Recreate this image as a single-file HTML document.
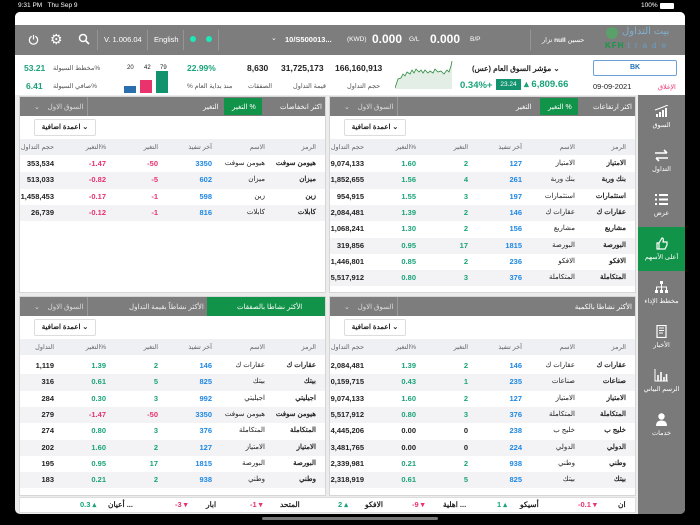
<!DOCTYPE html>
<html><head><meta charset="utf-8"><style>
*{margin:0;padding:0;box-sizing:border-box}
body{width:700px;height:525px;background:#000;position:relative;overflow:hidden;font-family:"Liberation Sans","Noto Sans CJK SC",sans-serif;color:#222}
.a{position:absolute;white-space:nowrap}
#scr{position:absolute;left:15px;top:12px;width:670px;height:502px;background:#ececec;border-radius:5px;overflow:hidden}
.hdr{position:absolute;left:0;top:13px;width:670px;height:30px;background:#7d7d7d;color:#fff}
.sep{position:absolute;top:5px;width:1px;height:20px;background:#959595}
.panel{position:absolute;width:307px;background:#fff;border:1px solid #d6d6d6}
.ph{position:absolute;left:0;top:0;width:100%;height:19px;background:#7d7d7d;color:#fff;font-size:7px}
.dd{position:absolute;top:22px;left:14px;width:62px;height:17px;border:1px solid #ddd;border-radius:2px;font-size:7px;font-weight:bold;line-height:15px;text-align:center;background:#fff}
.ch{position:absolute;top:42px;left:0;width:100%;height:16px;background:#eef0f3;font-size:6.5px;color:#666}
.ch span,.r span{position:absolute;text-align:right}
.r{position:absolute;left:0;width:100%;height:16.3px;font-size:7.5px;font-weight:bold;line-height:16px}
.r:nth-of-type(even){background:#f3f3f5}
.c1{right:9px}.c2{right:60px;font-weight:normal}.c3{right:113px;color:#1e88e5}.c4{right:167px}.c5{right:219px}.c6{right:271px}
.r .c1{font-size:7px}
.r .c2{font-size:7px}
.g{color:#1aa37a}.rd{color:#e8336d}
.sb{position:absolute;left:623px;top:83px;width:47px;height:419px;background:#7a7a7a}
.si{position:absolute;left:0;width:47px;height:44px;color:#fff;font-size:6.5px;text-align:center}
.si .ic{position:absolute;left:16px;top:10px;width:15px;height:13px}
.si .lb{position:absolute;left:0;width:47px;top:26px}
.tk{position:absolute;top:485px;height:16px;background:#fff;border:1px solid #ddd;font-size:7.5px;font-weight:bold;line-height:14px}
</style></head><body>
<div class="a" style="left:18px;top:2px;color:#fff;font-size:6.5px">9:31 PM &nbsp; Thu Sep 9</div>
<div class="a" style="left:641px;top:2px;color:#fff;font-size:6.5px">100%</div>
<div class="a" style="left:660px;top:3px;width:14px;height:6px;background:#fff;border-radius:1px"></div>
<div id="scr">
<div style="position:absolute;left:0;top:0;width:670px;height:13px;background:#fff"></div>
<div class="hdr">
 <svg class="a" style="left:13px;top:9px" width="11" height="11" viewBox="0 0 12 12"><path d="M4 2.5A4.5 4.5 0 1 0 8 2.5M6 1v5" stroke="#fff" stroke-width="1.3" fill="none"/></svg>
 <div class="a" style="left:35px;top:6px;font-size:14px">⚙</div>
 <svg class="a" style="left:63px;top:8px" width="12" height="12" viewBox="0 0 12 12"><circle cx="5" cy="5" r="3.5" stroke="#fff" stroke-width="1.5" fill="none"/><path d="M7.5 7.5L11 11" stroke="#fff" stroke-width="1.6"/></svg>
 <div class="sep" style="left:82px"></div>
 <div class="a" style="left:89px;top:10px;font-size:7.5px">V. 1.006.04</div>
 <div class="sep" style="left:132px"></div>
 <div class="a" style="left:139px;top:10px;font-size:7.5px">English</div>
 <div class="sep" style="left:168px"></div>
 <div class="a" style="left:175px;top:11px;width:6px;height:6px;border-radius:3px;background:#1de9b6"></div>
 <div class="a" style="left:191px;top:11px;width:6px;height:6px;border-radius:3px;background:#1de9b6"></div>
 <div class="sep" style="left:203px"></div>
 <div class="a" style="left:256px;top:9px;font-size:7px">⌄</div>
 <div class="a" style="left:270px;top:10px;font-size:7.5px;font-weight:bold">10/S500013...</div>
 <div class="a" style="left:332px;top:11px;font-size:6.5px">(KWD)</div>
 <div class="a" style="left:357px;top:7px;font-size:12px;font-weight:bold">0.000</div>
 <div class="a" style="left:394px;top:11px;font-size:6.5px">G/L</div>
 <div class="a" style="left:415px;top:7px;font-size:12px;font-weight:bold">0.000</div>
 <div class="a" style="left:455px;top:11px;font-size:6.5px">B/P</div>
 <div class="sep" style="left:515px"></div>
 <div class="a" style="left:527px;top:11px;font-size:6.5px">نزار <b>null</b> حسين</div>
 <div class="a" style="left:607px;top:1px;font-size:10px;color:#7fb0d0">بيت التداول</div>
 <div class="a" style="left:590px;top:16px;font-size:8px;font-weight:bold;color:#119a48;letter-spacing:1px">KFH <span style="color:#6a9ec4;font-weight:normal;letter-spacing:5px">trade</span></div>
 <div class="a" style="left:591px;top:2px;width:12px;height:12px;border-radius:6px;background:#5aa06a"></div>
</div>
<div style="position:absolute;left:0;top:43px;width:670px;height:40px;background:#fff"></div>
<div class="a" style="left:9px;top:51px;font-size:8.5px;font-weight:bold;color:#1aa37a">53.21</div>
<div class="a" style="left:38px;top:52px;font-size:6.5px;color:#555">مخطط السيولة%</div>
<div class="a" style="left:11px;top:69px;font-size:8.5px;font-weight:bold;color:#1aa37a">6.41</div>
<div class="a" style="left:38px;top:70px;font-size:6.5px;color:#555">صافي السيولة%</div>
<div class="a" style="left:112px;top:53px;font-size:6px">20</div>
<div class="a" style="left:129px;top:53px;font-size:6px">42</div>
<div class="a" style="left:145px;top:53px;font-size:6px">79</div>
<div class="a" style="left:109px;top:74px;width:12px;height:7px;background:#2b6fae"></div>
<div class="a" style="left:125px;top:68px;width:12px;height:13px;background:#e8336d"></div>
<div class="a" style="left:141px;top:59px;width:12px;height:22px;background:#12936d"></div>
<div class="a" style="left:172px;top:51px;font-size:8.5px;font-weight:bold;color:#1aa37a">22.99%</div>
<div class="a" style="left:172px;top:70px;font-size:6.5px;color:#555">% منذ بداية العام</div>
<div class="a" style="left:232px;top:51px;font-size:8.5px;font-weight:bold">8,630</div>
<div class="a" style="left:233px;top:70px;font-size:6.5px;color:#555">الصفقات</div>
<div class="a" style="left:266px;top:51px;font-size:8.5px;font-weight:bold">31,725,173</div>
<div class="a" style="left:278px;top:70px;font-size:6.5px;color:#555">قيمة التداول</div>
<div class="a" style="left:320px;top:51px;font-size:8.5px;font-weight:bold">166,160,913</div>
<div class="a" style="left:332px;top:70px;font-size:6.5px;color:#555">حجم التداول</div>
<svg class="a" style="left:380px;top:49px" width="58" height="28" viewBox="0 0 58 28"><path d="M0 27L3 18 6 17 8 13 10 15 12 11 15 13 17 9 19 12 21 8 24 11 26 9 28 12 30 9 33 12 35 10 38 12 40 8 43 11 46 10 49 13 52 9 54 11 56 5 57 0V28H0Z" fill="#e3efe6"/><path d="M0 27L3 18 6 17 8 13 10 15 12 11 15 13 17 9 19 12 21 8 24 11 26 9 28 12 30 9 33 12 35 10 38 12 40 8 43 11 46 10 49 13 52 9 54 11 56 5 57 0" stroke="#2e8b3e" stroke-width="0.8" fill="none"/></svg>
<div class="a" style="left:457px;top:52px;font-size:7.5px;font-weight:bold">(مؤشر السوق العام (عس ⌄</div>
<div class="a" style="left:445px;top:68px;font-size:9.5px;font-weight:bold;color:#1aa37a">0.34%+</div>
<div class="a" style="left:481px;top:67px;width:25px;height:11px;background:#12936d;color:#fff;font-size:6.5px;text-align:center;line-height:11px">23.24</div>
<div class="a" style="left:509px;top:67px;font-size:9.5px;font-weight:bold;color:#1aa37a">▴ 6,809.66</div>
<div class="a" style="left:578px;top:48px;width:84px;height:16px;border:1px solid #6aa2d8;border-radius:2px;color:#1e6fb8;font-size:7px;font-weight:bold;text-align:center;line-height:14px">BK</div>
<div class="a" style="left:578px;top:70px;font-size:7.5px">09-09-2021</div>
<div class="a" style="left:643px;top:71px;font-size:6.5px;color:#e8336d">الإغلاق</div>

<div class="panel" style="left:4px;top:84px;height:197px">
 <div class="ph"><span class="a" style="right:3px;top:6px">اكثر انخفاضات</span><div class="a" style="left:204px;top:1px;width:38px;height:17px;background:#12934a"></div><span class="a" style="left:212px;top:6px">التغير %</span><span class="a" style="left:183px;top:6px">التغير</span><div class="a" style="left:67px;top:0;width:1px;height:19px;background:#999"></div><span class="a" style="left:14px;top:6px;color:#ddd">⌄ &nbsp;&nbsp; السوق الاول</span></div>
 <div class="dd">اعمدة اضافية ⌄</div>
 <div class="ch"><span class="c1" style="top:4px">الرمز</span><span class="c2" style="top:4px">الاسم</span><span class="c3" style="top:4px;color:#666">آخر تنفيذ</span><span class="c4" style="top:4px">التغير</span><span class="c5" style="top:4px">التغير%</span><span class="c6" style="top:4px">حجم التداول</span></div>
 <div style="position:absolute;top:59px;left:0;width:100%">
 <div class="r" style="top:0"><span class="c1">هيومن سوفت</span><span class="c2">هيومن سوفت</span><span class="c3">3350</span><span class="c4 rd">-50</span><span class="c5 rd">-1.47</span><span class="c6">353,534</span></div>
 <div class="r" style="top:16.3px"><span class="c1">ميزان</span><span class="c2">ميزان</span><span class="c3">602</span><span class="c4 rd">-5</span><span class="c5 rd">-0.82</span><span class="c6">513,033</span></div>
 <div class="r" style="top:32.6px"><span class="c1">زين</span><span class="c2">زين</span><span class="c3">598</span><span class="c4 rd">-1</span><span class="c5 rd">-0.17</span><span class="c6">1,458,453</span></div>
 <div class="r" style="top:48.9px"><span class="c1">كابلات</span><span class="c2">كابلات</span><span class="c3">816</span><span class="c4 rd">-1</span><span class="c5 rd">-0.12</span><span class="c6">26,739</span></div>
 </div>
</div>

<div class="panel" style="left:314px;top:84px;height:197px">
 <div class="ph"><span class="a" style="right:3px;top:6px">اكثر ارتفاعات</span><div class="a" style="left:210px;top:1px;width:38px;height:17px;background:#12934a"></div><span class="a" style="left:218px;top:6px">التغير %</span><span class="a" style="left:186px;top:6px">التغير</span><div class="a" style="left:67px;top:0;width:1px;height:19px;background:#999"></div><span class="a" style="left:14px;top:6px;color:#ddd">⌄ &nbsp;&nbsp; السوق الاول</span></div>
 <div class="dd">اعمدة اضافية ⌄</div>
 <div class="ch"><span class="c1" style="top:4px">الرمز</span><span class="c2" style="top:4px">الاسم</span><span class="c3" style="top:4px;color:#666">آخر تنفيذ</span><span class="c4" style="top:4px">التغير</span><span class="c5" style="top:4px">التغير%</span><span class="c6" style="top:4px">حجم التداول</span></div>
 <div style="position:absolute;top:59px;left:0;width:100%">
 <div class="r" style="top:0"><span class="c1">الامتياز</span><span class="c2">الامتياز</span><span class="c3">127</span><span class="c4 g">2</span><span class="c5 g">1.60</span><span class="c6">9,074,133</span></div>
 <div class="r" style="top:16.3px"><span class="c1">بنك وربة</span><span class="c2">بنك وربة</span><span class="c3">261</span><span class="c4 g">4</span><span class="c5 g">1.56</span><span class="c6">1,852,655</span></div>
 <div class="r" style="top:32.6px"><span class="c1">استثمارات</span><span class="c2">استثمارات</span><span class="c3">197</span><span class="c4 g">3</span><span class="c5 g">1.55</span><span class="c6">954,915</span></div>
 <div class="r" style="top:48.9px"><span class="c1">عقارات ك</span><span class="c2">عقارات ك</span><span class="c3">146</span><span class="c4 g">2</span><span class="c5 g">1.39</span><span class="c6">2,084,481</span></div>
 <div class="r" style="top:65.2px"><span class="c1">مشاريع</span><span class="c2">مشاريع</span><span class="c3">156</span><span class="c4 g">2</span><span class="c5 g">1.30</span><span class="c6">1,068,241</span></div>
 <div class="r" style="top:81.5px"><span class="c1">البورصة</span><span class="c2">البورصة</span><span class="c3">1815</span><span class="c4 g">17</span><span class="c5 g">0.95</span><span class="c6">319,856</span></div>
 <div class="r" style="top:97.8px"><span class="c1">الافكو</span><span class="c2">الافكو</span><span class="c3">236</span><span class="c4 g">2</span><span class="c5 g">0.85</span><span class="c6">1,446,801</span></div>
 <div class="r" style="top:114.1px"><span class="c1">المتكاملة</span><span class="c2">المتكاملة</span><span class="c3">376</span><span class="c4 g">3</span><span class="c5 g">0.80</span><span class="c6">5,517,912</span></div>
 </div>
</div>

<div class="panel" style="left:4px;top:284px;height:200px;overflow:hidden">
 <div class="ph"><div class="a" style="left:187px;top:0;width:119px;height:19px;background:#12934a"></div><span class="a" style="left:217px;top:6px">الأكثر نشاطا بالصفقات</span><span class="a" style="left:109px;top:6px;color:#eee">الأكثر نشاطاً بقيمة التداول</span><div class="a" style="left:67px;top:0;width:1px;height:19px;background:#999"></div><span class="a" style="left:14px;top:6px;color:#ddd">⌄ &nbsp;&nbsp; السوق الاول</span></div>
 <div class="dd">اعمدة اضافية ⌄</div>
 <div class="ch"><span class="c1" style="top:4px">الرمز</span><span class="c2" style="top:4px">الاسم</span><span class="c3" style="top:4px;color:#666">آخر تنفيذ</span><span class="c4" style="top:4px">التغير</span><span class="c5" style="top:4px">التغير%</span><span class="c6" style="top:4px">التداول</span></div>
 <div style="position:absolute;top:61px;left:0;width:100%">
 <div class="r" style="top:0"><span class="c1">عقارات ك</span><span class="c2">عقارات ك</span><span class="c3">146</span><span class="c4 g">2</span><span class="c5 g">1.39</span><span class="c6">1,119</span></div>
 <div class="r" style="top:16.3px"><span class="c1">بيتك</span><span class="c2">بيتك</span><span class="c3">825</span><span class="c4 g">5</span><span class="c5 g">0.61</span><span class="c6">316</span></div>
 <div class="r" style="top:32.6px"><span class="c1">اجيليتي</span><span class="c2">اجيليتي</span><span class="c3">992</span><span class="c4 g">3</span><span class="c5 g">0.30</span><span class="c6">284</span></div>
 <div class="r" style="top:48.9px"><span class="c1">هيومن سوفت</span><span class="c2">هيومن سوفت</span><span class="c3">3350</span><span class="c4 rd">-50</span><span class="c5 rd">-1.47</span><span class="c6">279</span></div>
 <div class="r" style="top:65.2px"><span class="c1">المتكاملة</span><span class="c2">المتكاملة</span><span class="c3">376</span><span class="c4 g">3</span><span class="c5 g">0.80</span><span class="c6">274</span></div>
 <div class="r" style="top:81.5px"><span class="c1">الامتياز</span><span class="c2">الامتياز</span><span class="c3">127</span><span class="c4 g">2</span><span class="c5 g">1.60</span><span class="c6">202</span></div>
 <div class="r" style="top:97.8px"><span class="c1">البورصة</span><span class="c2">البورصة</span><span class="c3">1815</span><span class="c4 g">17</span><span class="c5 g">0.95</span><span class="c6">195</span></div>
 <div class="r" style="top:114.1px"><span class="c1">وطني</span><span class="c2">وطني</span><span class="c3">938</span><span class="c4 g">2</span><span class="c5 g">0.21</span><span class="c6">183</span></div>
 </div>
</div>

<div class="panel" style="left:314px;top:284px;height:200px">
 <div class="ph"><span class="a" style="right:3px;top:6px">الأكثر نشاطا بالكمية</span><div class="a" style="left:67px;top:0;width:1px;height:19px;background:#999"></div><span class="a" style="left:14px;top:6px;color:#ddd">⌄ &nbsp;&nbsp; السوق الاول</span></div>
 <div class="dd">اعمدة اضافية ⌄</div>
 <div class="ch"><span class="c1" style="top:4px">الرمز</span><span class="c2" style="top:4px">الاسم</span><span class="c3" style="top:4px;color:#666">آخر تنفيذ</span><span class="c4" style="top:4px">التغير</span><span class="c5" style="top:4px">التغير%</span><span class="c6" style="top:4px">حجم التداول</span></div>
 <div style="position:absolute;top:61px;left:0;width:100%">
 <div class="r" style="top:0"><span class="c1">عقارات ك</span><span class="c2">عقارات ك</span><span class="c3">146</span><span class="c4 g">2</span><span class="c5 g">1.39</span><span class="c6">2,084,481</span></div>
 <div class="r" style="top:16.3px"><span class="c1">صناعات</span><span class="c2">صناعات</span><span class="c3">235</span><span class="c4 g">1</span><span class="c5 g">0.43</span><span class="c6">0,159,715</span></div>
 <div class="r" style="top:32.6px"><span class="c1">الامتياز</span><span class="c2">الامتياز</span><span class="c3">127</span><span class="c4 g">2</span><span class="c5 g">1.60</span><span class="c6">9,074,133</span></div>
 <div class="r" style="top:48.9px"><span class="c1">المتكاملة</span><span class="c2">المتكاملة</span><span class="c3">376</span><span class="c4 g">3</span><span class="c5 g">0.80</span><span class="c6">5,517,912</span></div>
 <div class="r" style="top:65.2px"><span class="c1">خليج ب</span><span class="c2">خليج ب</span><span class="c3">238</span><span class="c4">0</span><span class="c5">0.00</span><span class="c6">4,445,206</span></div>
 <div class="r" style="top:81.5px"><span class="c1">الدولي</span><span class="c2">الدولي</span><span class="c3">224</span><span class="c4">0</span><span class="c5">0.00</span><span class="c6">3,481,765</span></div>
 <div class="r" style="top:97.8px"><span class="c1">وطني</span><span class="c2">وطني</span><span class="c3">938</span><span class="c4 g">2</span><span class="c5 g">0.21</span><span class="c6">2,339,981</span></div>
 <div class="r" style="top:114.1px"><span class="c1">بيتك</span><span class="c2">بيتك</span><span class="c3">825</span><span class="c4 g">5</span><span class="c5 g">0.61</span><span class="c6">2,318,919</span></div>
 </div>
</div>

<div class="sb">
 <div class="si" style="top:0"><svg class="ic" viewBox="0 0 15 13"><path d="M3 12V9M6 12V7M9 12V5M12 12V3" stroke="#fff" stroke-width="2"/><path d="M1 5Q7 3 14 0" stroke="#fff" fill="none"/></svg><div class="lb">السوق</div></div>
 <div class="si" style="top:44px"><svg class="ic" viewBox="0 0 15 13"><path d="M1 4H13M10 1L13 4M14 9H2M5 12L2 9" stroke="#fff" stroke-width="1.6" fill="none"/></svg><div class="lb">التداول</div></div>
 <div class="si" style="top:88px"><svg class="ic" viewBox="0 0 15 13"><path d="M1 2H3M5 2H14M1 6.5H3M5 6.5H14M1 11H3M5 11H14" stroke="#fff" stroke-width="2"/></svg><div class="lb">عرض</div></div>
 <div class="si" style="top:132px;background:#12934a"><svg class="ic" viewBox="0 0 15 13"><path d="M3 6H5V12H3ZM5 6L8 1Q10 1 9 5H13V8L11 12H5" stroke="#fff" stroke-width="1.2" fill="none"/></svg><div class="lb">أعلى الأسهم</div></div>
 <div class="si" style="top:176px"><svg class="ic" viewBox="0 0 15 13"><path d="M6 0H9V3H6ZM1 9H4V12H1ZM6 9H9V12H6ZM11 9H14V12H11Z" fill="#fff"/><path d="M7.5 3V9M2.5 9V6H12.5V9" stroke="#fff" fill="none"/></svg><div class="lb">مخطط الإداء</div></div>
 <div class="si" style="top:220px"><svg class="ic" viewBox="0 0 15 13"><rect x="3" y="0.5" width="9" height="12" stroke="#fff" fill="none" stroke-width="1.2"/><path d="M5 3H10M5 5.5H10M5 8H9" stroke="#fff"/></svg><div class="lb">الأخبار</div></div>
 <div class="si" style="top:264px"><svg class="ic" viewBox="0 0 15 13"><path d="M1 0V12H14" stroke="#fff" fill="none"/><path d="M4 12V6M7 12V3M10 12V8M12.5 12V5" stroke="#fff" stroke-width="1.6"/></svg><div class="lb">الرسم البياني</div></div>
 <div class="si" style="top:308px"><svg class="ic" viewBox="0 0 15 13"><circle cx="7.5" cy="3.5" r="3.2" fill="#fff"/><path d="M2 13Q2 7.5 7.5 7.5Q13 7.5 13 13Z" fill="#fff"/></svg><div class="lb">خدمات</div></div>
</div>

<div class="tk" style="left:4px;width:617px">
 <span class="a" style="left:60px;color:#1aa37a">0.3 ▴</span><span class="a" style="left:88px">أعيان ...</span>
 <span class="a" style="left:155px;color:#e8336d">-3 ▾</span><span class="a" style="left:186px">ابار</span>
 <span class="a" style="left:230px;color:#e8336d">-1 ▾</span><span class="a" style="left:260px">المتحد</span>
 <span class="a" style="left:318px;color:#1aa37a">2 ▴</span><span class="a" style="left:345px">الافكو</span>
 <span class="a" style="left:392px;color:#e8336d">-9 ▾</span><span class="a" style="left:423px">اهلية ...</span>
 <span class="a" style="left:477px;color:#1aa37a">1 ▴</span><span class="a" style="left:500px">أسيكو</span>
 <span class="a" style="left:558px;color:#e8336d">-0.1 ▾</span><span class="a" style="left:598px">ان</span>
</div>
</div>
<div class="a" style="left:262px;top:517px;width:176px;height:3px;border-radius:2px;background:#777"></div>
</body></html>
